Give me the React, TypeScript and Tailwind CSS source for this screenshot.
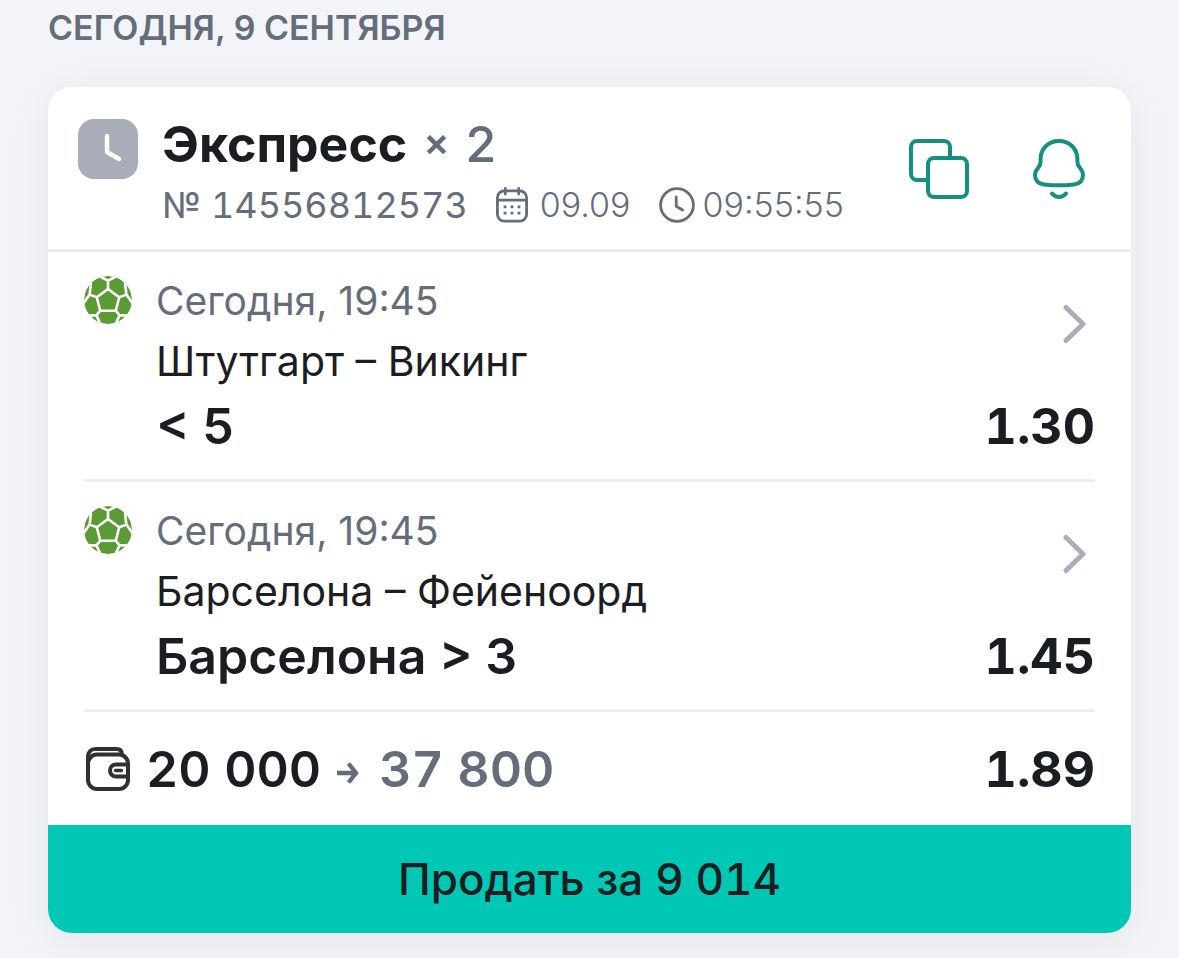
import { ReactNode } from "react";

const SoccerBall = () => (
  <svg className="w-12 h-12 flex-none" viewBox="0 0 48 48" fill="none" aria-hidden="true">
    <clipPath id="ball">
      <circle cx="24" cy="24" r="24" />
    </clipPath>
    <g clipPath="url(#ball)">
      <circle cx="24" cy="24" r="24" fill="#5c9a35" />
      <g stroke="#fff" strokeWidth="2.6" strokeLinejoin="round">
        <path d="M24 13 35.2 21.2 31.8 34.700H16.2L12.800 21.2Z" />
        <path d="M24 13V4.700M24 4.700 14 -.5M24 4.700 34 -.5" />
        <path d="M12.800 21.2 5.600 18.6M5.600 18.6 7 7M5.600 18.6 -1 28" />
        <path d="M35.2 21.2 42.4 18.6M42.4 18.6 41 7M42.4 18.6 49 28" />
        <path d="M16.2 34.700 12.400 39.400M12.400 39.400H5M12.400 39.400 16.500 48" />
        <path d="M31.8 34.700 35.600 39.400M35.600 39.400H43M35.600 39.400 31.500 48" />
      </g>
    </g>
  </svg>
);

const PendingIcon = () => (
  <svg className="w-[60px] h-[60px] flex-none" viewBox="0 0 60 60" fill="none" aria-hidden="true">
    <rect width="60" height="60" rx="16" fill="#a9adba" />
    <path d="M29 17V33L41 40" stroke="#fff" strokeWidth="4.4" strokeLinecap="round" strokeLinejoin="round" />
  </svg>
);

const CalendarIcon = () => (
  <svg className="w-8 h-9 flex-none" viewBox="0 0 32 36" fill="none" stroke="currentColor" strokeWidth="2.8" aria-hidden="true">
    <rect x="1.4" y="3.8" width="29.2" height="30.4" rx="7" />
    <path d="M1.5 13.2H30.5" />
    <path d="M9.3 1.4V7M22.7 1.4V7" strokeLinecap="round" />
    <path d="M7.6 19.8H10.4M14.6 19.8H17.4M21.6 19.8H24.4M7.6 26.2H10.4M14.6 26.2H17.4M21.6 26.2H24.4" />
  </svg>
);

const ClockIcon = () => (
  <svg className="w-9 h-9 flex-none" viewBox="0 0 36 36" fill="none" stroke="currentColor" strokeWidth="2.8" aria-hidden="true">
    <circle cx="18" cy="18" r="16.4" />
    <path d="M17.2 10V19.2L23.6 23" strokeLinecap="round" strokeLinejoin="round" />
  </svg>
);

const CopyIcon = () => (
  <svg className="w-[60px] h-[60px]" viewBox="0 0 60 60" fill="none" stroke="currentColor" strokeWidth="4" aria-hidden="true">
    <path d="M19 41H8A6 6 0 0 1 2 35V8A6 6 0 0 1 8 2H35A6 6 0 0 1 41 8V19" />
    <rect x="19" y="19" width="39" height="39" rx="6" />
  </svg>
);

const BellIcon = () => (
  <svg className="w-[52px] h-[60px]" viewBox="0 0 52 60" fill="none" stroke="currentColor" strokeWidth="4" strokeLinecap="round" strokeLinejoin="round" aria-hidden="true">
    <path d="M26 2C15.2 2 7.6 10 7.6 20V23C7.6 29 2 29.5 2 35.5C2 41 5.2 44.8 11 45.5Q26 47.2 41 45.5C46.8 44.8 50 41 50 35.5C50 29.5 44.4 29 44.4 23V20C44.4 10 36.8 2 26 2Z" />
    <path d="M19 54.5C22.5 59 29.5 59 33 54.5" />
  </svg>
);

const ChevronIcon = () => (
  <svg className="w-10 h-10" viewBox="0 0 40 40" fill="none" aria-hidden="true">
    <path d="M11 3.5 28 20 11 36.5" stroke="#aaaeba" strokeWidth="5" strokeLinecap="round" strokeLinejoin="round" />
  </svg>
);

const WalletIcon = () => (
  <svg className="w-11 h-11 flex-none" viewBox="0 0 44 44" fill="none" stroke="#2f3135" strokeWidth="4" strokeLinecap="round" aria-hidden="true">
    <rect x="2" y="7.6" width="40" height="34.4" rx="9" />
    <path d="M2 17V9.5C2 5 5 2 9.5 2H30.5C34 2 35.8 3.5 35.8 7" />
    <path d="M42 17.5H30A6 6 0 0 0 30 29.5H42" />
    <path d="M29.5 23.5H35.5" strokeWidth="3.4" />
  </svg>
);

const ArrowIcon = () => (
  <svg className="w-[22px] h-[22px] flex-none mt-2" viewBox="0 0 22 22" fill="none" stroke="currentColor" strokeWidth="4.4" aria-hidden="true">
    <path d="M0 11H19M11.5 1.5 19 11 11.5 20.5" />
  </svg>
);

type BetRowProps = {
  date: string;
  match: string;
  pick: string;
  odds: string;
};

const BetRow = ({ date, match, pick, odds }: BetRowProps) => (
  <li className="flex gap-6 mx-9 pt-6 pb-[23px] border-b-[3px] border-[#eceef0]">
    <SoccerBall />
    <div className="flex-1">
      <div className="text-[39px] leading-[50px] text-[#656d7b]">{date}</div>
      <div className="text-[41px] leading-[70px]">{match}</div>
      <div className="text-[50px] leading-[60px] font-semibold">{pick}</div>
    </div>
    <div className="flex flex-col items-end justify-between pt-7">
      <button type="button" aria-label={match}>
        <ChevronIcon />
      </button>
      <div className="text-[50px] leading-[60px] font-bold tabular-nums">{odds}</div>
    </div>
  </li>
);

const IconButton = ({ label, children }: { label: string; children: ReactNode }) => (
  <button type="button" aria-label={label} className="text-[#14907f]">
    {children}
  </button>
);

const bets: BetRowProps[] = [
  { date: "Сегодня, 19:45", match: "Штутгарт – Викинг", pick: "< 5", odds: "1.30" },
  { date: "Сегодня, 19:45", match: "Барселона – Фейеноорд", pick: "Барселона > 3", odds: "1.45" },
];

export default function App() {
  return (
    <main className="min-h-screen bg-[#f2f4f7] px-12 pt-1 pb-6 font-['Inter',sans-serif] text-[#1a1d21]">
      <h1 className="text-[34px] leading-[48px] font-semibold text-[#656d7b] uppercase">
        Сегодня, 9 сентября
      </h1>
      <section className="mt-[35px] rounded-3xl overflow-hidden bg-white shadow-[0_8px_48px_rgba(30,35,50,0.06)]">
        <header className="flex items-start gap-6 pl-[30px] pr-[46px] pt-8 pb-[26px] border-b-[3px] border-[#eceef0]">
          <PendingIcon />
          <div className="flex-1 flex flex-col gap-[18px]">
            <h2 className="flex gap-4 text-[50px] leading-[50px] font-bold">
              Экспресс
              <span className="flex gap-4 font-medium text-[#656d7b]">
                <span className="text-[39px] leading-[46px] font-semibold">×</span>2
              </span>
            </h2>
            <div className="flex gap-7 text-[34px] leading-9 text-[#656d7b]">
              <span className="text-[36px] tabular-nums">№ 14556812573</span>
              <span className="flex gap-3 font-light">
                <CalendarIcon />
                09.09
              </span>
              <span className="flex gap-2 font-light">
                <ClockIcon />
                09:55:55
              </span>
            </div>
          </div>
          <div className="flex gap-16 pt-5">
            <IconButton label="Копировать">
              <CopyIcon />
            </IconButton>
            <IconButton label="Уведомления">
              <BellIcon />
            </IconButton>
          </div>
        </header>
        <ul>
          {bets.map((bet) => (
            <BetRow key={bet.match} {...bet} />
          ))}
        </ul>
        <div className="flex items-center gap-4 pl-[38px] pr-9 h-[113px] text-[50px] leading-[60px] font-semibold tabular-nums">
          <WalletIcon />
          <span>20 000</span>
          <span className="flex items-center gap-5 text-[#656d7b]">
            <ArrowIcon />
            37 800
          </span>
          <span className="ml-auto font-bold">1.89</span>
        </div>
        <button type="button" className="w-full h-[108px] bg-[#00c8b4] text-[44px] font-medium tabular-nums">
          Продать за 9 014
        </button>
      </section>
    </main>
  );
}
